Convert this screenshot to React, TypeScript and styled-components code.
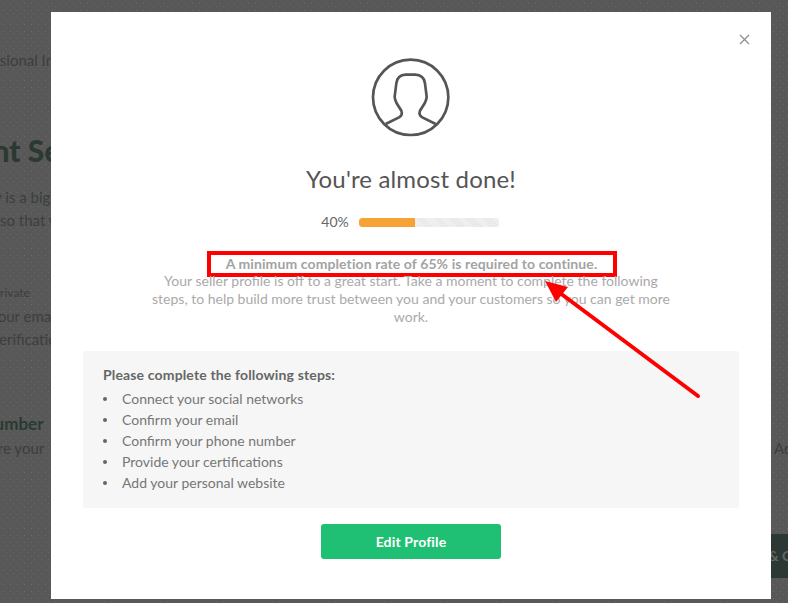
import styled, { createGlobalStyle } from 'styled-components';

const STEPS = [
  'Connect your social networks',
  'Confirm your email',
  'Confirm your phone number',
  'Provide your certifications',
  'Add your personal website',
];

function App() {
  return (
    <>
      <GlobalStyle />
      <Page>
        <Crumb>Professional Info</Crumb>
        <Heading>Account Security</Heading>
        <BodyLine $mt={16} $shift={-46}>Privacy is a big</BodyLine>
        <BodyLine $shift={0}>so that we</BodyLine>
        <PrivateLabel>Private</PrivateLabel>
        <BodyLine $mt={4} $shift={-10}>Your email</BodyLine>
        <BodyLine $shift={-10}>Verification</BodyLine>
        <NumberLabel>Phone Number</NumberLabel>
        <SplitRow>
          <BodyLine $shift={-26}>Share your</BodyLine>
          <RightText>Add</RightText>
        </SplitRow>
        <SaveBar>Save &amp; Continue</SaveBar>
      </Page>

      <Modal>
        <CloseButton aria-label='Close'>
          <svg width='11' height='11' viewBox='0 0 11 11'>
            <path d='M1 1l9 9M10 1l-9 9' stroke='#8f8f8f' strokeWidth='1.3' fill='none' />
          </svg>
        </CloseButton>

        <Avatar viewBox='66 51 240 240' aria-hidden='true'>
          <circle cx='185' cy='172' r='113' />
          <path d='M110 252L150 232Q162 225 157 212L143 190Q137 178 137 170L142 130Q145 105 170 104H198Q225 105 228 130L233 170Q233 178 227 190L213 212Q208 225 220 232L260 252' />
        </Avatar>

        <Title>You're almost done!</Title>

        <ProgressRow>
          <span>40%</span>
          <ProgressTrack>
            <ProgressFill style={{ width: '40%' }} />
          </ProgressTrack>
        </ProgressRow>

        <MinimumNote>A minimum completion rate of 65% is required to continue.</MinimumNote>
        <Intro>
          Your seller profile is off to a great start. Take a moment to complete the following
          steps, to help build more trust between you and your customers so you can get more
          work.
        </Intro>

        <StepsPanel>
          <StepsTitle>Please complete the following steps:</StepsTitle>
          <StepsList>
            {STEPS.map((step) => (
              <li key={step}>{step}</li>
            ))}
          </StepsList>
        </StepsPanel>

        <EditButton>Edit Profile</EditButton>
      </Modal>

      <Arrow viewBox='0 0 788 603' aria-hidden='true'>
        <line x1='698' y1='396' x2='560' y2='293' />
        <polygon points='545,281 568,287 556,302' />
      </Arrow>
    </>
  );
}

const GlobalStyle = createGlobalStyle`
  html, body {
    margin: 0;
    padding: 0;
    height: 100%;
    overflow: hidden;
  }

  body {
    font-family: Lato, "Liberation Sans", sans-serif;
  }
`;

const Page = styled.div`
  width: 788px;
  height: 603px;
  box-sizing: border-box;
  padding-top: 50px;
  overflow: hidden;
  color: #3b3f3d;
  background-color: #585858;
  background-image:
    radial-gradient(circle, #6a6a6a 0.6px, transparent 0.9px),
    radial-gradient(circle, #676767 0.6px, transparent 0.9px);
  background-size: 7px 7px, 7px 7px;
  background-position: 0 0, 3px 3px;
`;

const Crumb = styled.div`
  height: 20px;
  margin-left: -42px;
  font-size: 15px;
  line-height: 20px;
  white-space: nowrap;
`;

const Heading = styled.h1`
  height: 40px;
  margin: 60px 0 0 -91px;
  color: #2a3a33;
  font-size: 30px;
  font-weight: 900;
  line-height: 40px;
  white-space: nowrap;
`;

const BodyLine = styled.div<{ $mt?: number; $shift: number }>`
  height: 23px;
  margin-top: ${(p) => p.$mt ?? 0}px;
  margin-left: ${(p) => p.$shift}px;
  font-size: 15px;
  line-height: 23px;
  white-space: nowrap;
`;

const PrivateLabel = styled.div`
  height: 16px;
  margin: 53px 0 0 -7px;
  font-size: 12px;
  line-height: 16px;
`;

const NumberLabel = styled.div`
  height: 24px;
  margin: 61px 0 0 -71px;
  color: #2a3a33;
  font-size: 17px;
  font-weight: 700;
  line-height: 24px;
  white-space: nowrap;
`;

const SplitRow = styled.div`
  display: flex;
  justify-content: space-between;
  margin-top: 1px;
`;

const RightText = styled.div`
  width: 14px;
  font-size: 15px;
  line-height: 23px;
  overflow: hidden;
  white-space: nowrap;
`;

const SaveBar = styled.div`
  box-sizing: border-box;
  width: 80px;
  height: 44px;
  margin: 74px 0 0 708px;
  overflow: hidden;
  border-radius: 3px 0 0 3px;
  background: #2b3833;
  color: #646864;
  font-size: 14px;
  font-weight: 700;
  line-height: 44px;
  text-indent: 28px;
  white-space: nowrap;
`;

const Modal = styled.div`
  position: fixed;
  top: 12px;
  left: 51px;
  display: flex;
  flex-direction: column;
  align-items: center;
  box-sizing: border-box;
  width: 720px;
  height: 587px;
  padding-top: 45px;
  background: #fff;
`;

const CloseButton = styled.button`
  position: absolute;
  top: 22px;
  right: 21px;
  display: flex;
  padding: 0;
  border: none;
  background: none;
`;

const Avatar = styled.svg`
  width: 80px;
  height: 80px;
  flex: none;
  fill: none;
  stroke: #555;
  stroke-width: 8;
`;

const Title = styled.h2`
  margin: 26px 0 0;
  color: #555;
  font-size: 24px;
  font-weight: 400;
  line-height: 32px;
  letter-spacing: 0.15px;
`;

const ProgressRow = styled.div`
  display: flex;
  align-items: center;
  gap: 10px;
  margin-top: 18px;
  padding-right: 2px;
  color: #666;
  font-size: 14px;
  line-height: 18px;
`;

const ProgressTrack = styled.div`
  width: 140px;
  height: 9px;
  border-radius: 3px;
  overflow: hidden;
  background: repeating-linear-gradient(45deg, #e6e6e6 0 1px, #f3f3f3 1px 2px);
`;

const ProgressFill = styled.div`
  height: 100%;
  border-radius: 3px 0 0 3px;
  background: #f7a234;
`;

const MinimumNote = styled.div`
  box-sizing: border-box;
  width: 410px;
  height: 26px;
  margin: 20px 0 0 1px;
  border: 4px solid #f00;
  color: #a3a3a3;
  font-size: 14px;
  font-weight: 700;
  line-height: 18px;
  letter-spacing: 0.1px;
  text-align: center;
  white-space: nowrap;
`;

const Intro = styled.p`
  width: 526px;
  margin: -5px 0 0;
  color: #aaa;
  font-size: 14px;
  line-height: 18px;
  text-align: center;
`;

const StepsPanel = styled.div`
  box-sizing: border-box;
  width: 656px;
  height: 157px;
  margin-top: 25px;
  padding: 15px 20px 0;
  border-radius: 3px;
  background: #f6f6f6;
`;

const StepsTitle = styled.div`
  color: #666;
  font-size: 14px;
  font-weight: 700;
  line-height: 18px;
  letter-spacing: 0.15px;
`;

const StepsList = styled.ul`
  margin: 4px 0 0;
  padding: 0;
  color: #777;
  font-size: 14px;
  line-height: 21px;
  list-style: none;

  > li {
    display: flex;
    align-items: center;
    gap: 15px;
  }

  > li::before {
    content: '';
    width: 4px;
    height: 4px;
    border-radius: 50%;
    background: #666;
  }
`;

const EditButton = styled.button`
  width: 180px;
  height: 35px;
  margin-top: 16px;
  border: none;
  border-radius: 3px;
  background: #1fc074;
  color: #fff;
  font-family: inherit;
  font-size: 14px;
  font-weight: 700;
  letter-spacing: 0.15px;
`;

const Arrow = styled.svg`
  position: fixed;
  top: 0;
  left: 0;
  width: 788px;
  height: 603px;
  pointer-events: none;

  line {
    stroke: #f00;
    stroke-width: 4;
    stroke-linecap: round;
  }

  polygon {
    fill: #f00;
  }
`;

export default App;
